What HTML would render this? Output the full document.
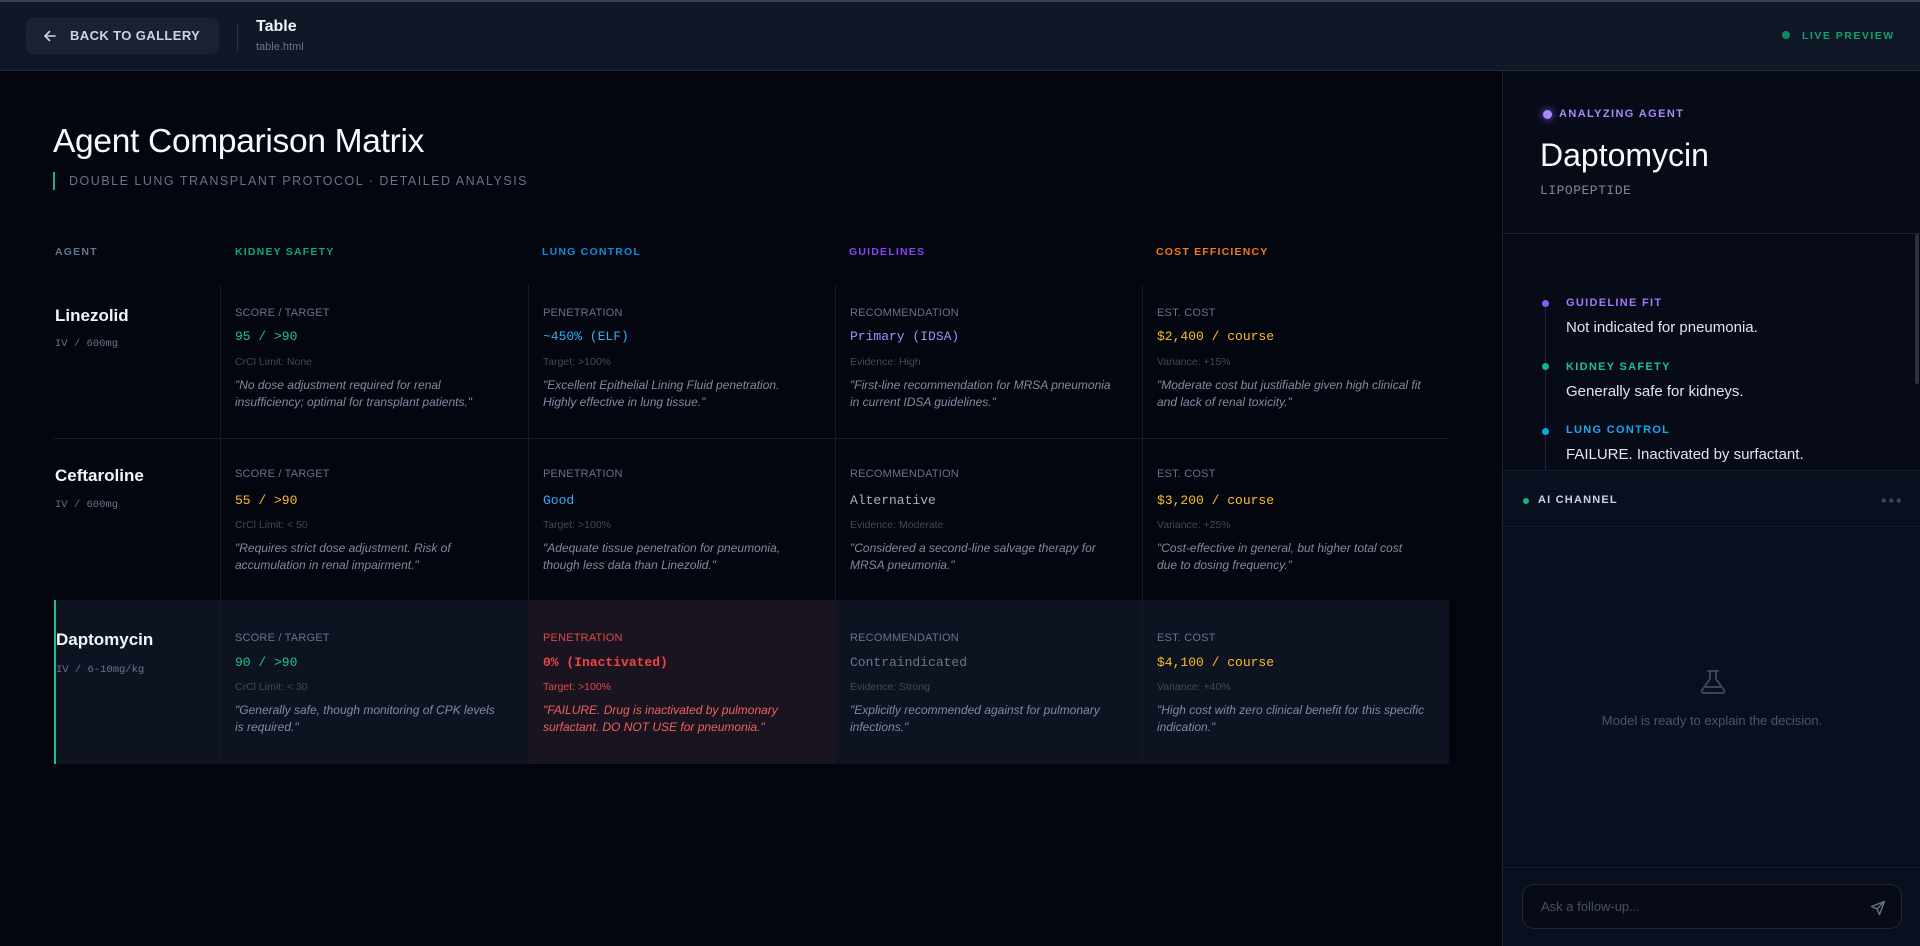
<!DOCTYPE html>
<html><head><meta charset="utf-8"><style>
*{box-sizing:border-box;margin:0;padding:0}
body{width:1920px;height:946px;overflow:hidden;background:#03060f;font-family:"Liberation Sans",sans-serif;color:#e2e8f0;position:relative}
.mono{font-family:"Liberation Mono","DejaVu Sans Mono",monospace}
.hdr{position:absolute;left:0;top:0;width:1920px;height:71px;background:#101828;border-top:2px solid #3a3f47;border-bottom:1px solid #222b3a}
.back{position:absolute;left:26px;top:16px;width:193px;height:36px;background:#1a2232;border-radius:7px;color:#cbd5e1;font-size:13px;font-weight:bold;letter-spacing:.4px;line-height:36px;padding-left:44px}
.back svg{position:absolute;left:17px;top:11px}
.vdiv{position:absolute;left:237px;top:22px;width:1px;height:28px;background:#273041}
.ttl{position:absolute;left:256px;top:16px;font-size:16px;font-weight:bold;color:#f1f5f9}
.fn{position:absolute;left:256px;top:39px;font-size:11px;color:#64748b}
.live{position:absolute;left:1782px;top:28px;font-size:10.5px;font-weight:bold;letter-spacing:1.5px;color:#10a070}
.live i{display:inline-block;width:8px;height:8px;border-radius:50%;background:#0f8a60;margin-right:12px;vertical-align:0}
h1{position:absolute;left:53px;top:123px;font-size:33.5px;font-weight:normal;color:#f8fafc;letter-spacing:-.3px}
.sub{position:absolute;left:53px;top:172px;height:18px;border-left:2px solid #10b981;padding-left:14px;font-size:12.5px;letter-spacing:1.5px;color:#64748b;line-height:18px}
.th{position:absolute;top:246px;font-size:10.5px;font-weight:bold;letter-spacing:1.2px}
.row{position:absolute;left:54px;width:1395px}
.cell{position:absolute;top:0;bottom:0;border-left:1px solid #141a29;padding-left:14px}
.lab{font-size:11px;color:#64748b;letter-spacing:.2px;position:absolute;left:14px}
.val{font-size:13px;position:absolute;left:14px}
.lim{font-size:10.5px;color:#3f4a5c;position:absolute;left:14px}
.q{font-size:12px;font-style:italic;color:#7f8ba0;line-height:17px;position:absolute;left:14px;width:268px}
.an{position:absolute;left:1px;font-size:17px;font-weight:bold;color:#f1f5f9}
.ad{position:absolute;left:1px;font-size:10.5px;color:#64748b}
.side{position:absolute;left:1502px;top:71px;width:418px;height:875px;background:#070b18;border-left:1px solid #1a2030}
</style></head><body>
<div class="hdr">
 <div class="back"><svg width="14" height="14" viewBox="0 0 14 14" fill="none" stroke="#cbd5e1" stroke-width="1.6" stroke-linecap="round" stroke-linejoin="round"><path d="M12 7H2M6.5 2.5L2 7l4.5 4.5"/></svg>BACK TO GALLERY</div>
 <div class="vdiv"></div>
 <div class="ttl">Table</div><div class="fn">table.html</div>
 <div class="live"><i></i>LIVE PREVIEW</div>
</div>

<h1>Agent Comparison Matrix</h1>
<div class="sub">DOUBLE LUNG TRANSPLANT PROTOCOL · DETAILED ANALYSIS</div>

<div class="th" style="left:55px;color:#64748b">AGENT</div>
<div class="th" style="left:235px;color:#10a873">KIDNEY SAFETY</div>
<div class="th" style="left:542px;color:#0e8fd6">LUNG CONTROL</div>
<div class="th" style="left:849px;color:#8b45f0">GUIDELINES</div>
<div class="th" style="left:1156px;color:#f27a18">COST EFFICIENCY</div>

<!-- row 1 -->
<div class="row" style="top:284px;height:155px;border-bottom:1px solid #161c2b">
 <div class="an" style="top:22px">Linezolid</div><div class="ad mono" style="top:54px">IV / 600mg</div>
 <div class="cell" style="left:166px;width:308px"><div class="lab" style="top:23px">SCORE / TARGET</div><div class="val mono" style="top:45px;color:#22c57f">95 / &gt;90</div><div class="lim" style="top:72px">CrCl Limit: None</div><div class="q" style="top:93px">"No dose adjustment required for renal insufficiency; optimal for transplant patients."</div></div>
 <div class="cell" style="left:474px;width:307px"><div class="lab" style="top:23px">PENETRATION</div><div class="val mono" style="top:45px;color:#38aef5">~450% (ELF)</div><div class="lim" style="top:72px">Target: &gt;100%</div><div class="q" style="top:93px">"Excellent Epithelial Lining Fluid penetration. Highly effective in lung tissue."</div></div>
 <div class="cell" style="left:781px;width:307px"><div class="lab" style="top:23px">RECOMMENDATION</div><div class="val mono" style="top:45px;color:#a78bfa">Primary (IDSA)</div><div class="lim" style="top:72px">Evidence: High</div><div class="q" style="top:93px">"First-line recommendation for MRSA pneumonia in current IDSA guidelines."</div></div>
 <div class="cell" style="left:1088px;width:307px"><div class="lab" style="top:23px">EST. COST</div><div class="val mono" style="top:45px;color:#fbbf24">$2,400 / course</div><div class="lim" style="top:72px">Variance: +15%</div><div class="q" style="top:93px">"Moderate cost but justifiable given high clinical fit and lack of renal toxicity."</div></div>
</div>
<!-- row 2 -->
<div class="row" style="top:439px;height:161px">
 <div class="an" style="top:27px">Ceftaroline</div><div class="ad mono" style="top:60px">IV / 600mg</div>
 <div class="cell" style="left:166px;width:308px"><div class="lab" style="top:29px">SCORE / TARGET</div><div class="val mono" style="top:54px;color:#fbbf24">55 / &gt;90</div><div class="lim" style="top:80px">CrCl Limit: &lt; 50</div><div class="q" style="top:101px">"Requires strict dose adjustment. Risk of accumulation in renal impairment."</div></div>
 <div class="cell" style="left:474px;width:307px"><div class="lab" style="top:29px">PENETRATION</div><div class="val mono" style="top:54px;color:#38aef5">Good</div><div class="lim" style="top:80px">Target: &gt;100%</div><div class="q" style="top:101px">"Adequate tissue penetration for pneumonia, though less data than Linezolid."</div></div>
 <div class="cell" style="left:781px;width:307px"><div class="lab" style="top:29px">RECOMMENDATION</div><div class="val mono" style="top:54px;color:#a4b0c2">Alternative</div><div class="lim" style="top:80px">Evidence: Moderate</div><div class="q" style="top:101px">"Considered a second-line salvage therapy for MRSA pneumonia."</div></div>
 <div class="cell" style="left:1088px;width:307px"><div class="lab" style="top:29px">EST. COST</div><div class="val mono" style="top:54px;color:#fbbf24">$3,200 / course</div><div class="lim" style="top:80px">Variance: +25%</div><div class="q" style="top:101px">"Cost-effective in general, but higher total cost due to dosing frequency."</div></div>
</div>
<!-- row 3 -->
<div class="row" style="top:600px;height:164px;background:#0e1321;border-left:2px solid #1fbf86">
 <div class="an" style="top:30px;left:0">Daptomycin</div><div class="ad mono" style="top:64px;left:0">IV / 6-10mg/kg</div>
 <div class="cell" style="left:164px;width:308px"><div class="lab" style="top:32px">SCORE / TARGET</div><div class="val mono" style="top:55px;color:#22c57f">90 / &gt;90</div><div class="lim" style="top:81px">CrCl Limit: &lt; 30</div><div class="q" style="top:102px">"Generally safe, though monitoring of CPK levels is required."</div></div>
 <div class="cell" style="left:472px;width:307px;background:#1a1420"><div class="lab" style="top:32px;color:#e04848">PENETRATION</div><div class="val mono" style="top:55px;color:#f04545;font-weight:bold">0% (Inactivated)</div><div class="lim" style="top:81px;color:#e04848">Target: &gt;100%</div><div class="q" style="top:102px;color:#f06060">"FAILURE. Drug is inactivated by pulmonary surfactant. DO NOT USE for pneumonia."</div></div>
 <div class="cell" style="left:779px;width:307px"><div class="lab" style="top:32px">RECOMMENDATION</div><div class="val mono" style="top:55px;color:#6b7686">Contraindicated</div><div class="lim" style="top:81px">Evidence: Strong</div><div class="q" style="top:102px">"Explicitly recommended against for pulmonary infections."</div></div>
 <div class="cell" style="left:1086px;width:307px"><div class="lab" style="top:32px">EST. COST</div><div class="val mono" style="top:55px;color:#fbbf24">$4,100 / course</div><div class="lim" style="top:81px">Variance: +40%</div><div class="q" style="top:102px">"High cost with zero clinical benefit for this specific indication."</div></div>
</div>

<div class="side">
 <div style="position:absolute;left:40px;top:39px;width:9px;height:9px;border-radius:50%;background:#a78bfa;box-shadow:0 0 8px #8b5cf6"></div>
 <div style="position:absolute;left:56px;top:37px;font-size:11px;font-weight:bold;letter-spacing:1.4px;color:#a78bfa">ANALYZING AGENT</div>
 <div style="position:absolute;left:37px;top:66px;font-size:32px;color:#f8fafc">Daptomycin</div>
 <div class="mono" style="position:absolute;left:37px;top:112px;font-size:13px;color:#7c8798;letter-spacing:.5px">LIPOPEPTIDE</div>
 <div style="position:absolute;left:0;top:162px;width:418px;height:1px;background:#1a2030"></div>
 <div style="position:absolute;left:412px;top:163px;width:4px;height:150px;background:#2a3140;border-radius:2px"></div>
 <div style="position:absolute;left:0;top:163px;width:410px;height:236px;overflow:hidden">
  <div style="position:absolute;left:42px;top:70px;width:1px;height:200px;background:#1c2540"></div>
  <div style="position:absolute;left:39px;top:66px;width:7px;height:7px;border-radius:50%;background:#8b5cf6"></div>
  <div style="position:absolute;left:63px;top:63px;font-size:11px;font-weight:bold;letter-spacing:1.3px;color:#a07af5">GUIDELINE FIT</div>
  <div style="position:absolute;left:63px;top:85px;font-size:15px;color:#dfe5ee">Not indicated for pneumonia.</div>
  <div style="position:absolute;left:39px;top:129px;width:7px;height:7px;border-radius:50%;background:#10b981"></div>
  <div style="position:absolute;left:63px;top:127px;font-size:11px;font-weight:bold;letter-spacing:1.3px;color:#1fc08a">KIDNEY SAFETY</div>
  <div style="position:absolute;left:63px;top:149px;font-size:15px;color:#dfe5ee">Generally safe for kidneys.</div>
  <div style="position:absolute;left:39px;top:194px;width:7px;height:7px;border-radius:50%;background:#0ea5e9"></div>
  <div style="position:absolute;left:63px;top:190px;font-size:11px;font-weight:bold;letter-spacing:1.3px;color:#1aa8ec">LUNG CONTROL</div>
  <div style="position:absolute;left:63px;top:212px;font-size:15px;color:#dfe5ee">FAILURE. Inactivated by surfactant.</div>
 </div>
 <div style="position:absolute;left:0;top:399px;width:418px;height:476px;background:#0a0f1f;border-top:1px solid #151b2a">
  <div style="position:absolute;left:20px;top:27px;width:6px;height:6px;border-radius:50%;background:#10b981"></div>
  <div style="position:absolute;left:35px;top:23px;font-size:11px;font-weight:bold;letter-spacing:1.2px;color:#cbd5e1">AI CHANNEL</div>
  <div style="position:absolute;left:377px;top:27px;width:22px;height:5px;background:radial-gradient(circle,#3a4354 2px,transparent 2.5px) 0 0/7.5px 5px repeat-x"></div>
  <div style="position:absolute;left:0;top:55px;width:418px;height:1px;background:#151b2a"></div>
  <svg style="position:absolute;left:195px;top:196px" width="30" height="30" viewBox="0 0 30 30" fill="none" stroke="#3a4456" stroke-width="2" stroke-linecap="round" stroke-linejoin="round"><path d="M10 4h10M12 4v8L4 23c-1 2 0 3 2 3h18c2 0 3-1 2-3L18 12V4M7 20h16"/></svg>
  <div style="position:absolute;left:0;width:418px;top:242px;text-align:center;font-size:13px;color:#4b5567">Model is ready to explain the decision.</div>
 </div>
 <div style="position:absolute;left:0;top:796px;width:418px;height:79px;background:#0a0f1f;border-top:1px solid #151b2a">
  <div style="position:absolute;left:19px;top:16px;width:380px;height:45px;border:1px solid #1f2636;border-radius:12px;background:#070b18">
   <div style="position:absolute;left:18px;top:14px;font-size:13px;color:#475063">Ask a follow-up...</div>
   <svg style="position:absolute;left:347px;top:15px" width="16" height="16" viewBox="0 0 16 16" fill="none" stroke="#6b7588" stroke-width="1.4" stroke-linejoin="round"><path d="M14.5 1.5L1.5 6.5l5.5 2.5 2.5 5.5zM14.5 1.5L7 9"/></svg>
  </div>
 </div>
</div>
</body></html>
